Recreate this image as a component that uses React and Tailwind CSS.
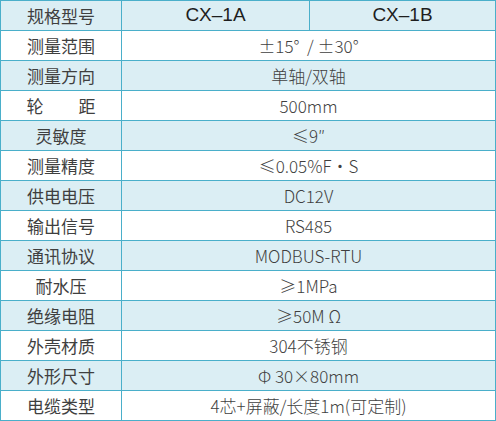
import React from "react";

const rows = [
  ["测量范围", "±15°  / ±30°"],
  ["测量方向", "单轴/双轴"],
  ["轮距", "500mm"],
  ["灵敏度", "≤9″"],
  ["测量精度", "≤0.05%F・S"],
  ["供电电压", "DC12V"],
  ["输出信号", "RS485"],
  ["通讯协议", "MODBUS-RTU"],
  ["耐水压", "≥1MPa"],
  ["绝缘电阻", "≥50M Ω"],
  ["外壳材质", "304不锈钢"],
  ["外形尺寸", "Φ 30×80mm"],
  ["电缆类型", "4芯+屏蔽/长度1m(可定制)"],
];

const cell =
  "h-[30px] border-r border-b border-[#4aafca] flex items-center justify-center";

export default function App() {
  return (
    <div
      className="w-[496px] bg-white text-[#3f3f3f]"
      style={{ fontFamily: '"Noto Sans CJK SC", "Noto Sans", sans-serif' }}
    >
      <div className="grid grid-cols-[121px_188px_186px] border-l border-t border-[#4aafca]">
        <div className={`${cell} bg-[#dbeef4] text-[17px]`}>规格型号</div>
        <div
          className={`${cell} bg-[#dbeef4] text-[19px] text-[#1e1e1e]`}
          style={{ fontFamily: '"Liberation Sans", sans-serif' }}
        >
          CX–1A
        </div>
        <div
          className={`${cell} bg-[#dbeef4] text-[19px] text-[#1e1e1e]`}
          style={{ fontFamily: '"Liberation Sans", sans-serif' }}
        >
          CX–1B
        </div>
        {rows.map(([label, value], i) => {
          const bg = i % 2 === 1 ? "bg-[#dbeef4]" : "bg-white";
          return (
            <React.Fragment key={label}>
              <div className={`${cell} ${bg} text-[17px]`}>
                {label === "轮距" ? (
                  <span className="flex w-[69px] justify-between">
                    <span>轮</span>
                    <span>距</span>
                  </span>
                ) : (
                  label
                )}
              </div>
              <div
                className={`${cell} ${bg} col-span-2 text-[17px] font-light whitespace-pre`}
              >
                {value}
              </div>
            </React.Fragment>
          );
        })}
      </div>
    </div>
  );
}
